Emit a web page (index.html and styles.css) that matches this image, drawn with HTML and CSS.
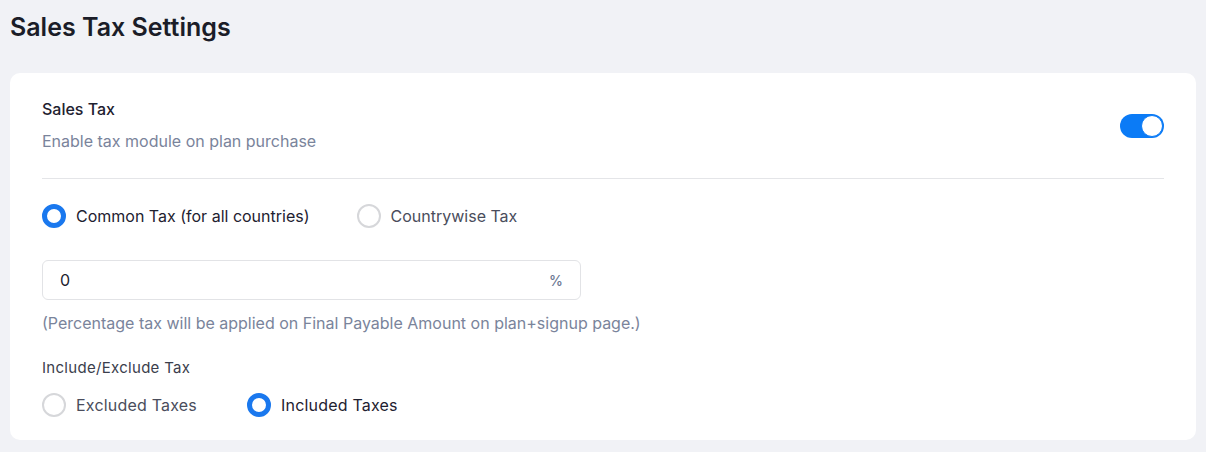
FILE: index.html
```html
<!DOCTYPE html>
<html lang="en">
<head>
<meta charset="utf-8">
<title>Sales Tax Settings</title>
<link rel="stylesheet" href="styles.css">
</head>
<body>
<main class="page">
  <h1 class="page-title">Sales Tax Settings</h1>
  <section class="card">
    <div class="card-head">
      <div class="head-text">
        <h2 class="section-title">Sales Tax</h2>
        <p class="section-desc">Enable tax module on plan purchase</p>
      </div>
      <span class="switch" role="switch" aria-checked="true"><span class="knob"></span></span>
    </div>
    <hr class="divider">
    <div class="radio-row">
      <label class="option is-checked"><span class="radio"></span><span class="option-text">Common Tax (for all countries)</span></label>
      <label class="option"><span class="radio"></span><span class="option-text">Countrywise Tax</span></label>
    </div>
    <div class="input-box">
      <span class="input-value">0</span>
      <span class="input-suffix">%</span>
    </div>
    <p class="hint">(Percentage tax will be applied on Final Payable Amount on plan+signup page.)</p>
    <p class="field-label">Include/Exclude Tax</p>
    <div class="radio-row radio-row-lg">
      <label class="option"><span class="radio"></span><span class="option-text">Excluded Taxes</span></label>
      <label class="option is-checked"><span class="radio"></span><span class="option-text">Included Taxes</span></label>
    </div>
  </section>
</main>
</body>
</html>
```
FILE: styles.css
```css
* { box-sizing: border-box; }
html, body { margin: 0; padding: 0; }
body {
  background: #f1f2f6;
  font-family: "Inter", "Open Sans", sans-serif;
  color: #1e2130;
}
.page {
  padding: 9px 10px 12px 10px;
}
.page-title {
  margin: 0;
  font-size: 25px;
  line-height: 36px;
  font-weight: 600;
  color: #1b1d28;
  letter-spacing: 0;
}
.card {
  margin-top: 28px;
  background: #fff;
  border-radius: 10px;
  padding: 24px 32px 24px 32px;
  height: 367px;
}
.card-head {
  display: flex;
  align-items: center;
  justify-content: space-between;
}
.section-title {
  margin: 0;
  font-size: 16px;
  line-height: 24px;
  font-weight: 500;
  color: #1e2130;
}
.section-desc {
  margin: 8px 0 0 0;
  font-size: 16px;
  line-height: 24px;
  color: #7a849b;
}
.switch {
  position: relative;
  display: block;
  width: 44px;
  height: 24px;
  border-radius: 12px;
  background: #0b7bf6;
  margin-top: 2px;
}
.knob {
  position: absolute;
  right: 1px;
  top: 1px;
  width: 22px;
  height: 22px;
  border-radius: 50%;
  background: #fff;
  border: 1px solid #0b7bf6;
}
.divider {
  margin: 25px 0 0 0;
  border: 0;
  border-top: 1px solid #e4e5e8;
}
.radio-row {
  display: flex;
  align-items: center;
  gap: 47px;
  margin-top: 25px;
}
.option {
  display: flex;
  align-items: center;
  gap: 10px;
  font-size: 16px;
  line-height: 24px;
  color: #4a4d5c;
}
.option.is-checked { color: #1e2130; }
.radio {
  width: 24px;
  height: 24px;
  border-radius: 50%;
  border: 2px solid #d6d7da;
  background: #fff;
  flex: none;
}
.is-checked .radio {
  border: 5px solid #1a78ee;
}
.input-box {
  margin-top: 32px;
  width: 539px;
  height: 40px;
  border: 1px solid #e2e3e6;
  border-radius: 6px;
  display: flex;
  align-items: center;
  justify-content: space-between;
  padding: 0 17px 0 17px;
}
.input-value {
  font-size: 16px;
  color: #222430;
}
.input-suffix {
  font-size: 14px;
  font-weight: 500;
  color: #6b7792;
}
.hint {
  margin: 11px 0 0 0;
  font-size: 16px;
  line-height: 24px;
  color: #7a849b;
}
.field-label {
  margin: 21px 0 0 0;
  font-size: 15px;
  line-height: 24px;
  letter-spacing: 0.3px;
  color: #3b3e4c;
}
.radio-row-lg {
  margin-top: 13px;
  gap: 50px;
}
.radio-row-lg .option {
  font-size: 16px;
  letter-spacing: 0.2px;
}
```
